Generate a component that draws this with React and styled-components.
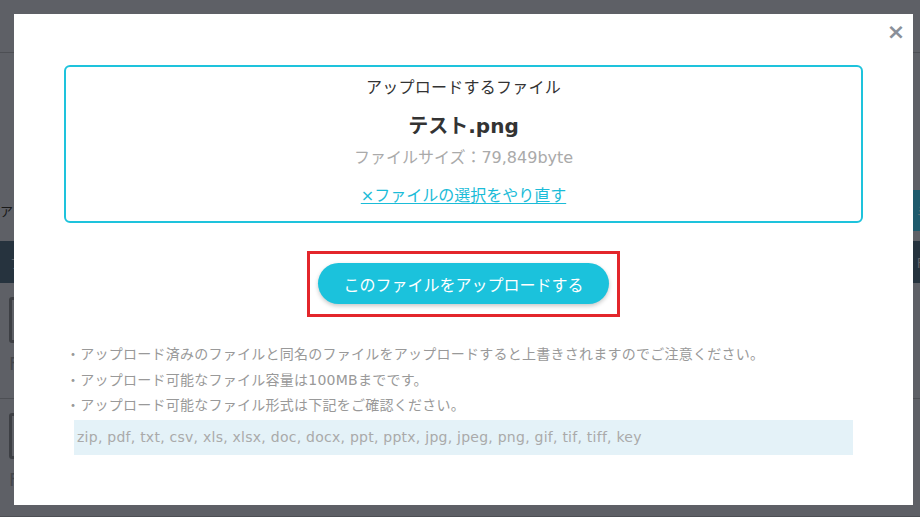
import React from "react";
import styled, { createGlobalStyle } from "styled-components";

const GlobalStyle = createGlobalStyle`
  html, body { margin: 0; padding: 0; }
  body {
    width: 920px;
    height: 517px;
    overflow: hidden;
    font-family: "DejaVu Sans", "Noto Sans CJK JP", sans-serif;
    background: #bcc0cc;
  }
`;

/* ---------- background page (behind the modal) ---------- */
const Page = styled.div`
  width: 944px;
  height: 517px;
  background: #bcc0cc;
  display: flex;
  flex-direction: column;
`;

const Header = styled.header`
  height: 53px;
  border-bottom: 1px solid #9a9ea8;
  display: flex;
  align-items: center;
  justify-content: flex-end;
  padding-right: 4px;
  font-size: 13px;
  color: #4a5060;
  font-family: "Noto Sans CJK JP", sans-serif;
`;

const Toolbar = styled.div`
  margin-top: 137px;
  height: 41px;
  display: flex;
  align-items: center;
  justify-content: space-between;
`;

const ToolbarText = styled.span`
  font-size: 13px;
  color: #333;
  font-family: "Noto Sans CJK JP", sans-serif;
`;

const ToolbarButton = styled.span`
  height: 41px;
  width: 31px;
  background: #3cb4d8;
  display: flex;
  align-items: center;
  padding-left: 3px;
  box-sizing: border-box;
  color: #dfe6ee;
  font-size: 13px;
  font-family: "Noto Sans CJK JP", sans-serif;
`;

const TableHead = styled.div`
  margin-top: 10px;
  height: 44px;
  background: #4c667c;
  display: flex;
  align-items: center;
  justify-content: space-between;
  padding: 0 0 0 10px;
  color: #c8ccd4;
  font-size: 13px;
  font-family: "Noto Sans CJK JP", sans-serif;
`;

const HeadCell = styled.span`
  margin-right: ${(p) => p.$mr || 0}px;
`;

const Row = styled.div`
  height: ${(p) => p.$h}px;
  border-bottom: 1px solid #9a9ea8;
  display: flex;
  align-items: flex-start;
  justify-content: space-between;
  padding: 14px 0 0 9px;
  box-sizing: content-box;
`;

const FileCell = styled.div`
  display: flex;
  flex-direction: column;
  gap: 10px;
`;

const FileIcon = styled.div`
  width: 30px;
  height: 40px;
  border: 3px solid #7a7e88;
  border-radius: 3px;
`;

const FileLabel = styled.span`
  font-size: 18px;
  color: #888c96;
  font-family: "DejaVu Sans", sans-serif;
`;

const DetailLink = styled.span`
  margin-top: 34px;
  margin-right: 6px;
  font-size: 14px;
  color: #3a78c0;
  font-family: "Noto Sans CJK JP", sans-serif;
`;

/* ---------- overlay + modal ---------- */
const Overlay = styled.div`
  position: fixed;
  inset: 0;
  background: rgba(0, 0, 0, 0.5);
  padding: 14px 0 0 14px;
  box-sizing: border-box;
`;

const Modal = styled.div`
  position: relative;
  width: 899px;
  height: 491px;
  background: #fff;
  box-sizing: border-box;
  padding: 51px 50px 0;
  display: flex;
  flex-direction: column;
`;

const CloseButton = styled.span`
  position: absolute;
  top: 8px;
  right: 7px;
  width: 20px;
  height: 20px;
  display: flex;
  align-items: center;
  justify-content: center;
  font-size: 22px;
  line-height: 1;
  font-weight: bold;
  color: #8a9099;
  font-family: "DejaVu Sans", sans-serif;
  cursor: pointer;
`;

const FileBox = styled.div`
  border: 2px solid #1ec3dc;
  border-radius: 6px;
  padding: 9px 20px 14px;
  display: flex;
  flex-direction: column;
  align-items: center;
  text-align: center;
`;

const BoxTitle = styled.div`
  font-size: 16px;
  line-height: 24px;
  letter-spacing: 0.25px;
  color: #333;
`;

const FileName = styled.div`
  margin-top: 11px;
  font-size: 20px;
  line-height: 30px;
  font-weight: bold;
  color: #333;
`;

const FileSize = styled.div`
  margin-top: 6px;
  font-size: 16px;
  line-height: 22px;
  color: #aaa;
`;

const ResetLink = styled.a`
  margin-top: 16px;
  font-size: 16px;
  line-height: 22px;
  color: #1bbcd8;
  text-decoration: underline;
  text-underline-offset: 2px;
  cursor: pointer;
`;

const ActionRow = styled.div`
  margin-top: 28px;
  display: flex;
  justify-content: center;
`;

const Highlight = styled.div`
  border: 3px solid #e3262b;
  padding: 9px 8px 10px;
`;

const UploadButton = styled.button`
  height: 41px;
  padding: 0 25px;
  border: none;
  border-radius: 21px;
  background: #1bc2dc;
  color: #fff;
  font-size: 16px;
  font-family: "Noto Sans CJK JP", sans-serif;
  box-shadow: 0 2px 4px rgba(0, 0, 0, 0.22);
  cursor: pointer;
`;

const Notes = styled.ul`
  margin: 25px 0 0;
  padding: 0 0 0 2px;
  list-style: none;
`;

const Note = styled.li`
  font-size: 14px;
  line-height: 25.5px;
  letter-spacing: 0.25px;
  color: #999;
  &::before {
    content: "・";
  }
`;

const FormatBox = styled.div`
  margin: 1.5px 10px 0;
  height: 35px;
  line-height: 35px;
  padding-left: 3px;
  background: #e4f2f8;
  font-size: 14px;
  letter-spacing: 0.25px;
  color: #aaa;
  font-family: "DejaVu Sans", sans-serif;
`;

const rows = [103, 106];

export default function App() {
  return (
    <>
      <GlobalStyle />
      <Page>
        <Header>ヘ</Header>
        <Toolbar>
          <ToolbarText>アップ</ToolbarText>
          <ToolbarButton>ミ</ToolbarButton>
        </Toolbar>
        <TableHead>
          <HeadCell>ファイル</HeadCell>
          <HeadCell $mr={20}>F</HeadCell>
        </TableHead>
        {rows.map((h, i) => (
          <Row key={i} $h={h}>
            <FileCell>
              <FileIcon />
              <FileLabel>F</FileLabel>
            </FileCell>
            <DetailLink>詳</DetailLink>
          </Row>
        ))}
      </Page>
      <Overlay>
        <Modal>
          <CloseButton>×</CloseButton>
          <FileBox>
            <BoxTitle>アップロードするファイル</BoxTitle>
            <FileName>テスト.png</FileName>
            <FileSize>ファイルサイズ：79,849byte</FileSize>
            <ResetLink>×ファイルの選択をやり直す</ResetLink>
          </FileBox>
          <ActionRow>
            <Highlight>
              <UploadButton>このファイルをアップロードする</UploadButton>
            </Highlight>
          </ActionRow>
          <Notes>
            <Note>アップロード済みのファイルと同名のファイルをアップロードすると上書きされますのでご注意ください。</Note>
            <Note>アップロード可能なファイル容量は100MBまでです。</Note>
            <Note>アップロード可能なファイル形式は下記をご確認ください。</Note>
          </Notes>
          <FormatBox>zip, pdf, txt, csv, xls, xlsx, doc, docx, ppt, pptx, jpg, jpeg, png, gif, tif, tiff, key</FormatBox>
        </Modal>
      </Overlay>
    </>
  );
}
